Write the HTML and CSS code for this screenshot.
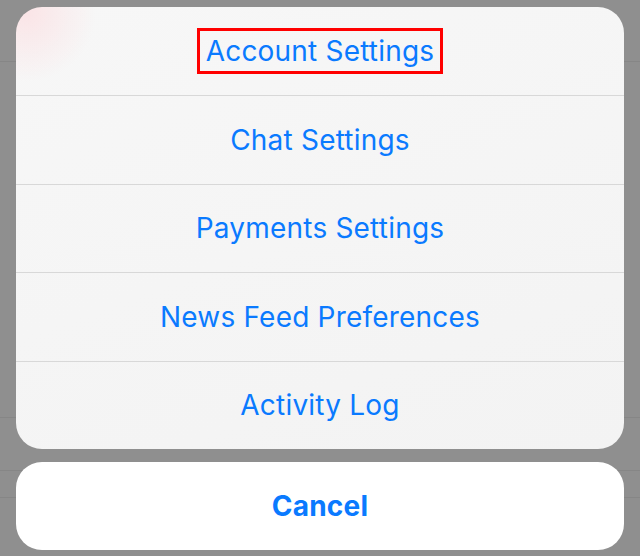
FILE: index.html
```html
<!DOCTYPE html>
<html lang="en">
<head>
  <meta charset="UTF-8" />
  <meta name="viewport" content="width=device-width, initial-scale=1.0"/>
  <title>Action Sheet</title>
  <link rel="stylesheet" href="styles.css">
</head>
<body>
  <div class="backdrop">
    <div class="sheet">
      <div class="group">
        <div class="row"><span class="label highlight">Account Settings</span></div>
        <div class="row"><span class="label">Chat Settings</span></div>
        <div class="row"><span class="label">Payments Settings</span></div>
        <div class="row"><span class="label">News Feed Preferences</span></div>
        <div class="row"><span class="label">Activity Log</span></div>
      </div>
      <div class="cancel"><span class="label">Cancel</span></div>
    </div>
  </div>
</body>
</html>
```

FILE: styles.css
```css
* {
  margin: 0;
  padding: 0;
  box-sizing: border-box;
}
body {
  width: 640px;
  height: 556px;
  overflow: hidden;
  font-family: 'Inter', 'Roboto', sans-serif;
  background: #8f8f8f;
}
.backdrop {
  height: 556px;
  padding: 7px 16px 0;
  background:
    linear-gradient(#868686, #868686) 0 61px / 100% 1px no-repeat,
    linear-gradient(#868686, #868686) 0 417px / 100% 1px no-repeat,
    linear-gradient(#868686, #868686) 0 470px / 100% 1px no-repeat,
    linear-gradient(#868686, #868686) 0 497px / 100% 1px no-repeat,
    #8f8f8f;
}
.sheet {
  display: flex;
  flex-direction: column;
  gap: 13px;
}
.group {
  border-radius: 26px;
  overflow: hidden;
  background:
    radial-gradient(circle at 10px 5px, rgba(255, 205, 210, 0.45), rgba(255, 220, 225, 0) 70px),
    linear-gradient(160deg, #f7f7f7, #f3f3f3);
}
.row {
  height: 88.4px;
  display: flex;
  align-items: center;
  justify-content: center;
  border-top: 1px solid #d8d8d8;
}
.row:first-child {
  border-top: none;
}
.label {
  color: #0a7aff;
  font-size: 28px;
  letter-spacing: 0.2px;
}
.highlight {
  outline: 3px solid #ff0000;
  padding: 3px 6px;
}
.cancel {
  height: 88px;
  border-radius: 26px;
  background: #ffffff;
  display: flex;
  align-items: center;
  justify-content: center;
}
.cancel .label {
  font-weight: 700;
}
```
